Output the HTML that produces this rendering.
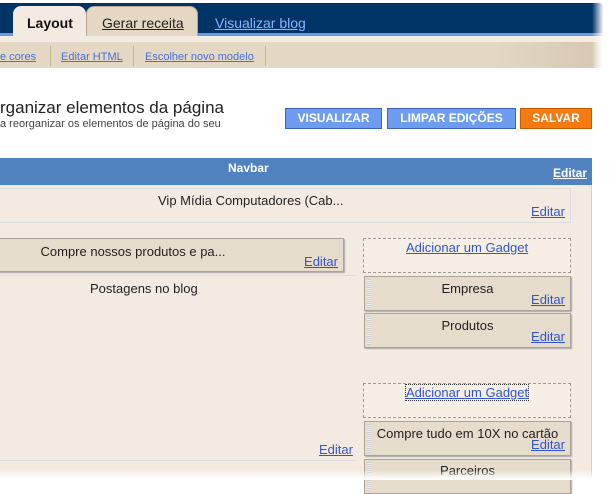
<!DOCTYPE html>
<html><head><meta charset="utf-8"><style>
*{margin:0;padding:0;box-sizing:border-box}
body{width:611px;height:480px;overflow:hidden;background:#fff;position:relative;font-family:"Liberation Sans",sans-serif;font-size:12px}
.a{position:absolute}
a,.l{color:#3355cc;text-decoration:underline}
.box{position:absolute;background:#e6dccb;border:1px solid #a9a39a;box-shadow:1px 1px 1px #aaa}
.grip{position:absolute;left:2px;top:2px;bottom:2px;width:4px;background:repeating-linear-gradient(#ccc 0 1px,#eee 1px 2px)}
.t{position:absolute;width:100%;text-align:center;color:#222;font-size:13px}
.e{position:absolute;right:5px;font-size:13px}
.dash{position:absolute;border:1px dashed #999;background:#f6efe6}
.sn{position:absolute;top:51px;color:#4a6fd6;text-decoration:underline;font-size:11px}
</style></head><body>
<div class="a" style="left:0;top:3px;width:605px;height:33px;background:#003366;border-bottom:3px solid #6a9be0;border-top-right-radius:6px"></div>
<div class="a" style="left:0;top:36px;width:611px;height:6px;background:#f2ebe2"></div>
<div class="a" style="left:13px;top:6px;width:73px;height:36px;background:#f3ebe1;border-radius:8px 8px 0 0"></div>
<div class="a" style="left:27px;top:15px;font-size:14px;font-weight:bold;color:#111">Layout</div>
<div class="a" style="left:86px;top:6px;width:112px;height:30px;background:#e4d8c5;border-radius:8px 8px 0 0;border:1px solid #b8a78a;border-bottom:none"></div>
<div class="a" style="left:102px;top:15px;font-size:14px;color:#222;text-decoration:underline">Gerar receita</div>
<div class="a" style="left:215px;top:15px;font-size:14px;color:#8ab4ff;text-decoration:underline">Visualizar blog</div>
<div class="a" style="left:0;top:42px;width:611px;height:26px;background:linear-gradient(90deg,#e4d8c5 80%,#d7c9b3 97%,#fff)"></div>
<div class="sn" style="left:0">e cores</div>
<div class="a" style="left:50px;top:46px;width:1px;height:20px;background:#c4b49a"></div>
<div class="sn" style="left:61px">Editar HTML</div>
<div class="a" style="left:133px;top:46px;width:1px;height:20px;background:#c4b49a"></div>
<div class="sn" style="left:145px">Escolher novo modelo</div>
<div class="a" style="left:265px;top:46px;width:1px;height:20px;background:#c4b49a"></div>
<div class="a" style="left:0;top:98px;font-size:17px;color:#222">rganizar elementos da página</div>
<div class="a" style="left:0;top:118px;font-size:11px;color:#444">a reorganizar os elementos de página do seu</div>
<div class="a" style="left:285px;top:108px;width:97px;height:21px;background:#6d9cf0;border:1px solid #3b63b8;color:#fff;font-weight:bold;text-align:center;line-height:19px">VISUALIZAR</div>
<div class="a" style="left:387px;top:108px;width:129px;height:21px;background:#6d9cf0;border:1px solid #3b63b8;color:#fff;font-weight:bold;text-align:center;line-height:19px">LIMPAR EDIÇÕES</div>
<div class="a" style="left:520px;top:108px;width:72px;height:21px;background:#f77a10;border:1px solid #c55a00;color:#fff;font-weight:bold;text-align:center;line-height:19px">SALVAR</div>
<div class="a" style="left:0;top:158px;width:592px;height:322px;background:#f3ebe1;border-right:1px solid #d8d0c4"></div>
<div class="a" style="left:0;top:158px;width:592px;height:27px;background:#5082c0"></div>
<div class="a" style="left:228px;top:161px;color:#fff;font-weight:bold">Navbar</div>
<div class="a" style="left:553px;top:166px;color:#fff;font-weight:bold;text-decoration:underline">Editar</div>
<div class="a" style="left:0;top:188px;width:571px;height:35px;border:1px solid #ddd;border-left:none"></div>
<div class="a" style="left:158px;top:193px;color:#222;font-size:13px">Vip Mídia Computadores (Cab...</div>
<a class="a" style="left:531px;top:204px;font-size:13px">Editar</a>
<div class="box" style="left:-2px;top:238px;width:346px;height:34px"><div class="t" style="top:5px;left:-38px">Compre nossos produtos e pa...</div><a class="e" style="top:15px">Editar</a></div>
<div class="a" style="left:0;top:275px;width:355px;height:1px;background:#ddd"></div>
<div class="a" style="left:90px;top:281px;color:#222;font-size:13px">Postagens no blog</div>
<a class="a" style="left:319px;top:442px;font-size:13px">Editar</a>
<div class="a" style="left:0;top:460px;width:355px;height:1px;background:#ddd"></div>
<div class="dash" style="left:363px;top:238px;width:208px;height:35px"><a class="a" style="left:42px;top:1px;font-size:13px">Adicionar um Gadget</a></div>
<div class="box" style="left:364px;top:276px;width:207px;height:35px"><div class="grip"></div><div class="t" style="top:4px">Empresa</div><a class="e" style="top:15px">Editar</a></div>
<div class="box" style="left:364px;top:313px;width:207px;height:35px"><div class="grip"></div><div class="t" style="top:4px">Produtos</div><a class="e" style="top:15px">Editar</a></div>
<div class="dash" style="left:363px;top:383px;width:208px;height:35px"><a class="a" style="left:42px;top:1px;font-size:13px;outline:1px dotted #333">Adicionar um Gadget</a></div>
<div class="box" style="left:364px;top:421px;width:207px;height:35px"><div class="grip"></div><div class="t" style="top:4px">Compre tudo em 10X no cartão</div><a class="e" style="top:15px">Editar</a></div>
<div class="box" style="left:364px;top:459px;width:207px;height:35px"><div class="grip"></div><div class="t" style="top:3px">Parceiros</div></div>
<div class="a" style="left:0;top:470px;width:611px;height:10px;background:linear-gradient(rgba(255,255,255,0),#fff 90%)"></div>
<div class="a" style="left:592px;top:0;width:19px;height:480px;background:linear-gradient(90deg,rgba(255,255,255,0),#fff 60%)"></div>
</body></html>
